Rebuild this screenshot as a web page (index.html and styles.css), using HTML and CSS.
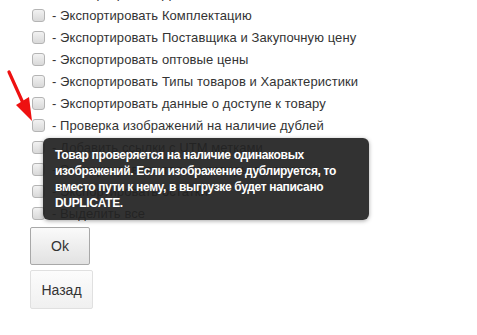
FILE: index.html
```html
<!DOCTYPE html>
<html>
<head>
<meta charset="utf-8">
<link rel="stylesheet" href="styles.css">
</head>
<body>
<div class="page">
  <ul class="opts">
    <li><span class="cb"></span><span>- Экспортировать Дополнительные поля</span></li>
    <li><span class="cb"></span><span>- Экспортировать Комплектацию</span></li>
    <li><span class="cb"></span><span>- Экспортировать Поставщика и Закупочную цену</span></li>
    <li><span class="cb"></span><span>- Экспортировать оптовые цены</span></li>
    <li><span class="cb"></span><span>- Экспортировать Типы товаров и Характеристики</span></li>
    <li><span class="cb"></span><span>- Экспортировать данные о доступе к товару</span></li>
    <li class="target"><span class="cb"></span><span>- Проверка изображений на наличие дублей</span>
      <div class="tip">Товар проверяется на наличие одинаковых изображений. Если изображение дублируется, то вместо пути к нему, в выгрузке будет написано DUPLICATE.</div>
    </li>
    <li><span class="cb"></span><span>- Добавить ссылки с UTM метками</span></li>
    <li><span class="cb"></span><span>- Экспортировать только товары в наличии</span></li>
    <li><span class="cb"></span><span>- Экспортировать остатки</span></li>
    <li><span class="cb"></span><span>- Выделить все</span></li>
  </ul>
  <div class="btns">
    <button class="btn btn-ok">Ok</button>
    <button class="btn btn-back">Назад</button>
  </div>
  <svg class="arrow" width="40" height="60" viewBox="0 0 40 60">
    <line x1="9" y1="7" x2="23" y2="38" stroke="#ee1111" stroke-width="3.2" stroke-linecap="round"/>
    <polygon points="16,40 29,32 32,56" fill="#ee1111"/>
  </svg>
</div>
</body>
</html>
```
FILE: styles.css
```css
html, body {
  margin: 0;
  padding: 0;
  background: #fff;
}
.page {
  position: relative;
  width: 477px;
  height: 335px;
  overflow: hidden;
  font-family: "Liberation Sans", Arial, sans-serif;
  color: #333;
}
.opts {
  list-style: none;
  margin: -18px 0 0 0;
  padding: 0 0 0 32px;
}
.opts li {
  position: relative;
  height: 22px;
  display: flex;
  align-items: center;
  gap: 7px;
  font-size: 13px;
  letter-spacing: 0.08px;
}
.cb {
  width: 11px;
  height: 11px;
  border: 1px solid #b4b4b4;
  border-radius: 3px;
  background: linear-gradient(#f2f2f2, #d9d9d9);
  flex: none;
}
.tip {
  position: absolute;
  left: 11px;
  top: 24px;
  width: 302px;
  padding: 9px 12px;
  border-radius: 6px;
  background: rgba(34, 34, 34, 0.93);
  box-shadow: 0 1px 4px rgba(0, 0, 0, 0.35);
  color: #fff;
  font-weight: bold;
  font-size: 12px;
  line-height: 16px;
  letter-spacing: -0.33px;
  z-index: 2;
}
.btns {
  display: flex;
  flex-direction: column;
  align-items: flex-start;
  gap: 5px;
  padding-left: 30px;
  margin-top: 3px;
}
.btn {
  font-family: "Liberation Sans", Arial, sans-serif;
  font-size: 14px;
  color: #333;
  border-radius: 2px;
  cursor: pointer;
}
.btn-ok {
  width: 60px;
  height: 38px;
  border: 1px solid #a8a8a8;
  background: linear-gradient(#fafafa, #e2e2e2);
}
.btn-back {
  width: 63px;
  height: 39px;
  border: 1px solid #e0e0e0;
  background: linear-gradient(#fcfcfc, #f0f0f0);
}
.arrow {
  position: absolute;
  left: 0;
  top: 65px;
}
```
